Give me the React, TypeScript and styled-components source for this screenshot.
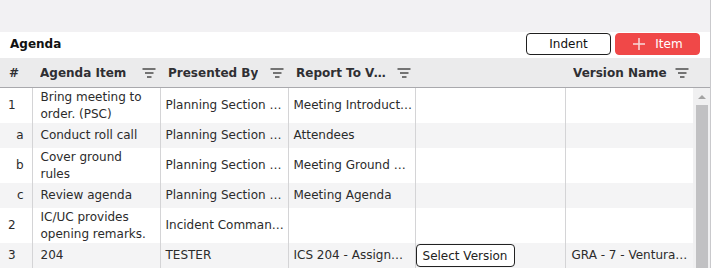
import React from "react";
import styled, { createGlobalStyle } from "styled-components";

const GlobalStyle = createGlobalStyle`
  html, body {
    margin: 0;
    padding: 0;
    background: #f2f1f3;
  }
  body {
    font-family: "DejaVu Sans", Verdana, sans-serif;
    font-size: 12px;
    color: #2b2b2b;
  }
`;

const Page = styled.div`
  width: 711px;
  height: 268px;
  overflow: hidden;
  box-sizing: border-box;
  border-right: 1px solid #c9c9cc;
  display: flex;
  flex-direction: column;
`;

const TopSpace = styled.div`
  height: 32px;
  flex: none;
`;

const Panel = styled.section`
  flex: 1;
  min-height: 0;
  background: #fff;
  display: flex;
  flex-direction: column;
`;

const Toolbar = styled.div`
  height: 26px;
  flex: none;
  display: flex;
  align-items: flex-start;
  padding: 1px 10px 0 10px;
  box-sizing: border-box;
  gap: 4px;
`;

const Title = styled.h2`
  margin: 0;
  flex: 1;
  font-size: 12px;
  font-weight: bold;
  color: #111;
  line-height: 22px;
`;

const Button = styled.button<{ $primary?: boolean }>`
  width: 85px;
  height: 22px;
  box-sizing: border-box;
  border-radius: 4px;
  font-family: inherit;
  font-size: 12px;
  padding: 0;
  display: flex;
  align-items: center;
  justify-content: center;
  gap: 9px;
  cursor: pointer;
  border: 1px solid ${(p) => (p.$primary ? "#f04848" : "#1f1f1f")};
  background: ${(p) => (p.$primary ? "#f04848" : "#fff")};
  color: ${(p) => (p.$primary ? "#fff" : "#111")};
`;

const Grid = styled.div`
  flex: 1;
  min-height: 0;
  display: flex;
  flex-direction: column;
`;

const Table = styled.table`
  width: 693px;
  table-layout: fixed;
  border-collapse: collapse;
  border-spacing: 0;
`;

const HeadTable = styled(Table)`
  width: 710px;
  background: #ebebec;
  border-bottom: 1px solid #a9a9ad;
`;

const HeadCell = styled.th<{ $pad?: number }>`
  height: 29px;
  padding: 0 4px 0 ${(p) => p.$pad ?? 8}px;
  text-align: left;
  font-weight: bold;
  color: #2f2f33;
  white-space: nowrap;
`;

const HeadInner = styled.div`
  display: flex;
  align-items: center;
  justify-content: space-between;
  gap: 4px;
`;

const HeadLabel = styled.span`
  overflow: hidden;
  text-overflow: ellipsis;
  white-space: nowrap;
`;

const BodyWrap = styled.div`
  flex: 1;
  min-height: 0;
  display: flex;
  overflow: hidden;
`;

const Row = styled.tr`
  &:nth-child(even) {
    background: #f4f4f5;
  }
`;

const Cell = styled.td<{ $pad?: number; $align?: string }>`
  height: 25px;
  box-sizing: border-box;
  padding: 1px 2px 1px ${(p) => p.$pad ?? 5}px;
  line-height: 16.5px;
  border-left: 1px solid #d4d4d6;
  vertical-align: middle;
  text-align: ${(p) => p.$align ?? "left"};
  overflow: hidden;
  text-overflow: ellipsis;
  white-space: nowrap;

  &:first-child {
    border-left: none;
    padding-right: 8px;
  }
`;

const WrapCell = styled(Cell)`
  white-space: normal;
  padding-right: 12px;
`;

const ButtonCell = styled(Cell)`
  padding: 0;
`;

const SelectButton = styled.button`
  width: 99px;
  height: 23px;
  box-sizing: border-box;
  border: 1px solid #222;
  border-radius: 4px;
  background: #fff;
  font-family: inherit;
  font-size: 12px;
  color: #222;
  padding: 0;
  display: block;
`;

const Scrollbar = styled.div`
  width: 17px;
  flex: none;
  background: #f0f0f1;
  display: flex;
  flex-direction: column;
  align-items: center;
`;

const ArrowUp = styled.div`
  margin-top: 7px;
  width: 0;
  height: 0;
  border-left: 4px solid transparent;
  border-right: 4px solid transparent;
  border-bottom: 4px solid #a3a3a3;
`;

const Thumb = styled.div`
  margin-top: 6px;
  width: 12px;
  flex: 1;
  background: #c1c1c3;
`;

const FilterIcon = () => (
  <svg width="14" height="10" viewBox="0 0 14 10" style={{ flex: "none" }}>
    <g stroke="#555" strokeWidth="1.6">
      <line x1="0.5" y1="1" x2="13.5" y2="1" />
      <line x1="3" y1="5" x2="11.5" y2="5" />
      <line x1="5" y1="9" x2="9.5" y2="9" />
    </g>
  </svg>
);

const PlusIcon = () => (
  <svg width="14" height="14" viewBox="0 0 14 14">
    <g stroke="#f8d4d4" strokeWidth="1.6">
      <line x1="7" y1="1" x2="7" y2="13" />
      <line x1="1" y1="7" x2="13" y2="7" />
    </g>
  </svg>
);

const widths = [32, 128, 128, 127, 150, 128];

const Cols = ({ filler }: { filler?: number }) => (
  <colgroup>
    {widths.map((w, i) => (
      <col key={i} style={{ width: w }} />
    ))}
    {filler ? <col style={{ width: filler }} /> : null}
  </colgroup>
);

type Item = {
  num: string;
  sub?: boolean;
  title: string;
  by: string;
  report: string;
  select?: boolean;
  version?: string;
};

const items: Item[] = [
  { num: "1", title: "Bring meeting to order. (PSC)", by: "Planning Section Chief", report: "Meeting Introduction" },
  { num: "a", sub: true, title: "Conduct roll call", by: "Planning Section Chief", report: "Attendees" },
  { num: "b", sub: true, title: "Cover ground rules", by: "Planning Section Chief", report: "Meeting Ground Rules" },
  { num: "c", sub: true, title: "Review agenda", by: "Planning Section Chief", report: "Meeting Agenda" },
  { num: "2", title: "IC/UC provides opening remarks.", by: "Incident Commander", report: "" },
  { num: "3", title: "204", by: "TESTER", report: "ICS 204 - Assignment List", select: true, version: "GRA - 7 - Ventura County" },
  { num: "4", title: "Review objectives", by: "Planning Section Chief", report: "" },
];

const headers = ["Agenda Item", "Presented By", "Report To Version", "", "Version Name"];

export default function App() {
  return (
    <>
      <GlobalStyle />
      <Page>
        <TopSpace />
        <Panel>
          <Toolbar>
            <Title>Agenda</Title>
            <Button>Indent</Button>
            <Button $primary>
              <PlusIcon />
              Item
            </Button>
          </Toolbar>
          <Grid>
            <HeadTable>
              <Cols filler={17} />
              <thead>
                <tr>
                  <HeadCell $pad={9}>#</HeadCell>
                  {headers.map((h, i) => (
                    <HeadCell key={i}>
                      {h && (
                        <HeadInner>
                          <HeadLabel>{h}</HeadLabel>
                          <FilterIcon />
                        </HeadInner>
                      )}
                    </HeadCell>
                  ))}
                  <HeadCell />
                </tr>
              </thead>
            </HeadTable>
            <BodyWrap>
              <Table>
                <Cols />
                <tbody>
                  {items.map((it) => (
                    <Row key={it.num}>
                      <Cell $pad={8} $align={it.sub ? "right" : "left"}>
                        {it.num}
                      </Cell>
                      <WrapCell $pad={8}>{it.title}</WrapCell>
                      <Cell>{it.by}</Cell>
                      <Cell>{it.report}</Cell>
                      {it.select ? (
                        <ButtonCell>
                          <SelectButton>Select Version</SelectButton>
                        </ButtonCell>
                      ) : (
                        <Cell />
                      )}
                      <Cell $pad={6}>{it.version}</Cell>
                    </Row>
                  ))}
                </tbody>
              </Table>
              <Scrollbar>
                <ArrowUp />
                <Thumb />
              </Scrollbar>
            </BodyWrap>
          </Grid>
        </Panel>
      </Page>
    </>
  );
}
